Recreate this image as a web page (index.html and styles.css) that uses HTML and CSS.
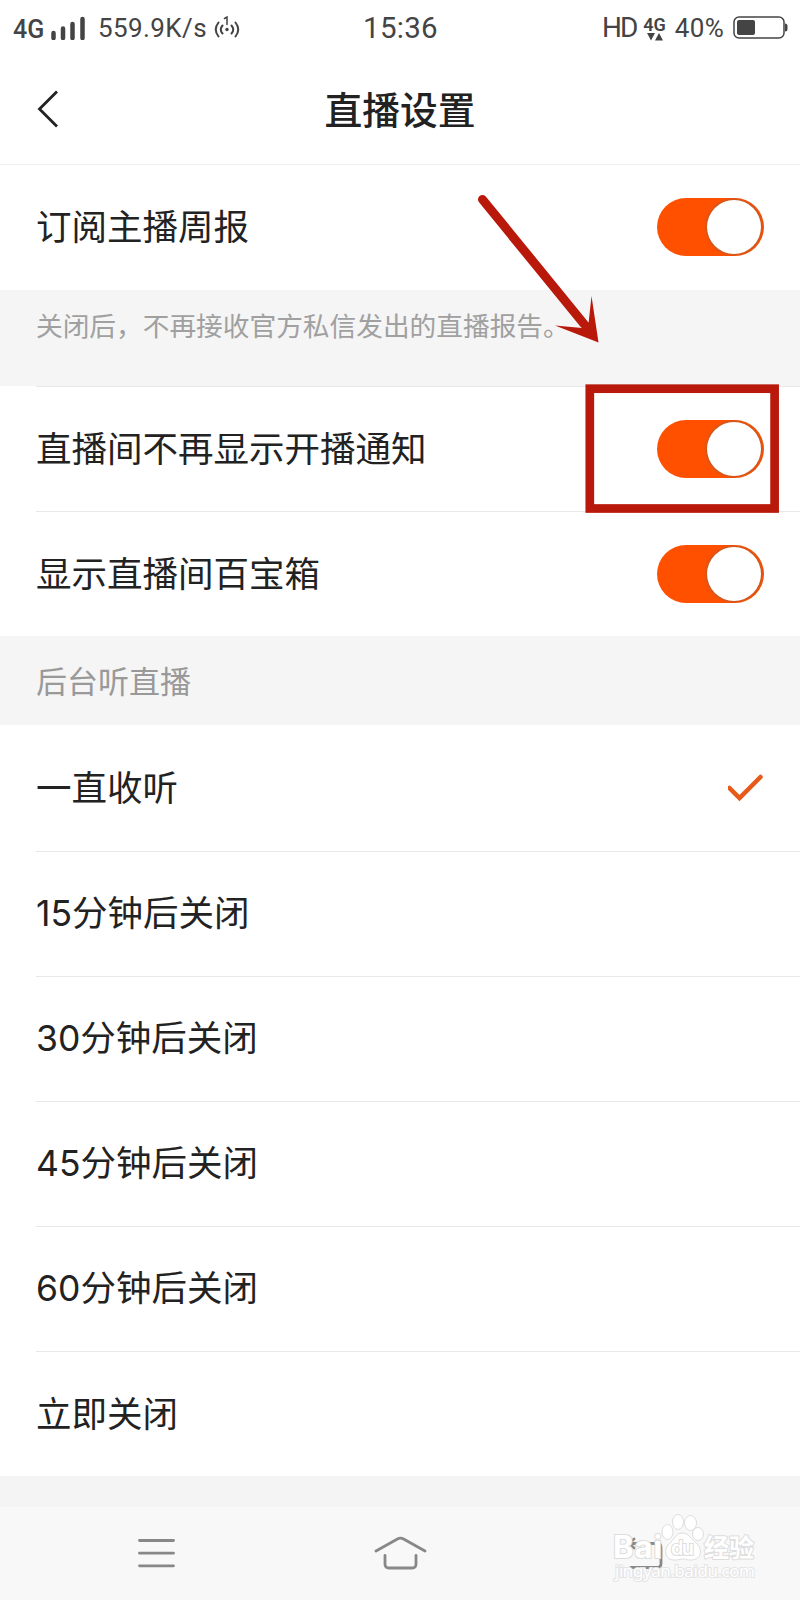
FILE: index.html
```
<!DOCTYPE html>
<html lang="zh-CN">
  <head>
    <meta charset="utf-8">
    <title>直播设置</title>
    <link rel="stylesheet" href="styles.css">
  </head>
  <body>
    <div class="status">
      <div class="status-side">
        <span class="net">4G</span>
        <svg class="signal" width="34" height="24" viewBox="0 0 34 24">
          <path d="M2.500 17v5M12 12.500v9.500M21.500 8v14M31.500 3v19" />
        </svg>
        <span class="speed">559.9K/s</span>
        <svg class="hotspot" width="26" height="24" viewBox="0 0 26 24">
          <path d="M4.500 6.500Q-1 13.500 4.500 20.500M8.500 9.500Q5 13.500 8.500 17.500M17.500 9.500Q21 13.500 17.500 17.500M21.500 6.500Q27 13.500 21.500 20.500" />
          <path class="thin" d="M10.500 2.500L13 1V8.500" />
          <circle cx="13" cy="13.500" r="1.700" />
        </svg>
      </div>
      <span class="time">15:36</span>
      <div class="status-side right">
        <span class="hd">HD</span>
        <div class="mini">
          <span>4G</span>
          <svg width="16" height="8" viewBox="0 0 16 8"><path d="M0 0h8l-4 7.500zM8 7.500h8l-4 -7.500z" /></svg>
        </div>
        <span class="percent">40%</span>
        <svg class="battery" width="55" height="24" viewBox="0 0 55 24">
          <rect class="shell" x="1" y="1" width="50" height="21" rx="5" />
          <rect x="4" y="4" width="18" height="15" rx="2" />
          <path d="M52 7.500q2.500 0 2.500 2.500v3q0 2.500 -2.500 2.500z" />
        </svg>
      </div>
    </div>

    <div class="header">
      <svg class="back" width="22" height="40" viewBox="0 0 22 40">
        <path d="M21 1.500L3.500 19L21 36.500" />
      </svg>
      <h1>直播设置</h1>
    </div>

    <div class="row first">
      <span>订阅主播周报</span>
      <div class="switch"></div>
    </div>
    <div class="note">关闭后，不再接收官方私信发出的直播报告。</div>
    <div class="group">
      <div class="row line">
        <span>直播间不再显示开播通知</span>
        <div class="switch"></div>
      </div>
      <div class="row line">
        <span>显示直播间百宝箱</span>
        <div class="switch"></div>
      </div>
    </div>

    <div class="label">后台听直播</div>
    <div class="group">
      <div class="row">
        <span>一直收听</span>
        <svg class="check" width="36" height="28" viewBox="0 0 36 28">
          <path d="M1.500 14L11.500 24L32.500 3" />
        </svg>
      </div>
      <div class="row line"><span>15分钟后关闭</span></div>
      <div class="row line"><span>30分钟后关闭</span></div>
      <div class="row line"><span>45分钟后关闭</span></div>
      <div class="row line"><span>60分钟后关闭</span></div>
      <div class="row line"><span>立即关闭</span></div>
    </div>
    <div class="spacer"></div>

    <div class="navbar">
      <svg width="38" height="30" viewBox="0 0 38 30">
        <path d="M2.500 2.500h34M2.500 15.200h34M2.500 27.800h34" />
      </svg>
      <svg width="54" height="34" viewBox="0 0 54 34">
        <path d="M2 15L23 3.200Q26.500 1.200 30 3.200L51 15M11 19.500v8.500q0 4 4 4h23q4 0 4 -4v-8.500" />
      </svg>
      <svg width="38" height="34" viewBox="0 0 38 34">
        <path d="M8 3L3 7.500L8 12M3 7.500h28q4 0 4 4v16q0 4 -4 4h-26" />
      </svg>
    </div>

    <!-- red arrow and frame over the second switch -->
    <svg class="marks" width="320" height="330" viewBox="470 190 320 330">
      <path class="shaft" d="M482.500 199.500L584 324" />
      <path class="tip" d="M598.500 342.500L555 325.500L582 328L588.700 322L591.500 296z" />
      <rect class="frame" x="589.800" y="388.700" width="184.800" height="119.800" />
    </svg>

    <svg class="watermark" width="160" height="80" viewBox="610 1510 160 80">
      <text class="logo" x="613" y="1558" textLength="49">Bai</text>
      <g class="paw">
        <ellipse cx="667.500" cy="1532" rx="5.500" ry="7.500" />
        <ellipse cx="678" cy="1522" rx="5.500" ry="7.500" />
        <ellipse cx="690.500" cy="1523" rx="6" ry="7.500" />
        <ellipse cx="698" cy="1534" rx="5.500" ry="6.500" />
        <path d="M682 1533C676 1533 674 1540 669 1544C664 1548 664 1559 673 1560C678 1560.500 679 1559 683 1559C687 1559 688 1560.500 692 1560C702 1559 703 1549 696 1543C691 1539 689 1533 682 1533z" />
      </g>
      <text class="du" x="671" y="1555" textLength="23">du</text>
      <text class="cn" x="704" y="1557" textLength="50">经验</text>
      <text class="url" x="615" y="1577" textLength="140">jingyan.baidu.com</text>
    </svg>
  </body>
</html>
```

FILE: styles.css
```
* {
  box-sizing: border-box;
}
body {
  margin: 0;
  width: 800px;
  height: 1600px;
  position: relative;
  overflow: hidden;
  background: #fff;
  color: #222;
  font-family: Inter, "Noto Sans CJK SC", sans-serif;
}
svg {
  display: block;
  flex: none;
}

.status {
  height: 56px;
  padding: 0 12px 0 13px;
  display: flex;
  align-items: center;
  justify-content: space-between;
  color: #444;
  line-height: 56px;
}
.status-side {
  width: 300px;
  height: 56px;
  display: flex;
  align-items: center;
}
.status-side.right {
  justify-content: flex-end;
}
.status svg {
  fill: #444;
}
.net {
  width: 33px;
  padding-top: 3px;
  font-family: Roboto, sans-serif;
  font-size: 25px;
  font-weight: 500;
}
.signal {
  margin-left: 5px;
}
.signal path {
  stroke: #444;
  stroke-width: 4.500;
  stroke-linecap: round;
}
.speed {
  width: 110px;
  margin-left: 13px;
  font-family: Roboto, sans-serif;
  font-size: 26px;
  letter-spacing: 0.4px;
}
.hotspot {
  margin-left: 6px;
}
.hotspot path {
  fill: none;
  stroke: #444;
  stroke-width: 2;
  stroke-linecap: round;
}
.hotspot .thin {
  stroke-width: 1.500;
}
.time {
  font-family: Roboto, sans-serif;
  font-size: 29.500px;
  letter-spacing: 0.3px;
}
.hd {
  font-family: Roboto, sans-serif;
  font-size: 28px;
  letter-spacing: -2px;
}
.mini {
  margin: 0 9px 0 7px;
  display: flex;
  flex-direction: column;
  align-items: center;
  font-family: Roboto, sans-serif;
  font-size: 18px;
  font-weight: 600;
  line-height: 17px;
}
.percent {
  font-family: Roboto, sans-serif;
  font-size: 26px;
  letter-spacing: 0.3px;
}
.battery {
  margin-left: 9px;
}
.battery .shell {
  fill: none;
  stroke: #444;
  stroke-width: 1.500;
}

.header {
  height: 109px;
  padding: 0 36px;
  display: grid;
  grid-template-columns: 22px 1fr 22px;
  align-items: center;
  border-bottom: 1px solid #eee;
}
.back path {
  fill: none;
  stroke: #222;
  stroke-width: 2.800;
}
h1 {
  margin: 0;
  text-align: center;
  font-size: 37.800px;
  font-weight: 500;
  line-height: 50px;
}

.row {
  height: 125.100px;
  padding-right: 36px;
  display: flex;
  align-items: center;
  justify-content: space-between;
  font-size: 35.500px;
  line-height: 50px;
}
.row span {
  padding-top: 1px;
}
.first {
  height: 124.500px;
  padding-left: 36px;
}
.first span {
  padding-top: 2px;
}
.group {
  padding-left: 36px;
}
.line {
  border-top: 1px solid #e8e8e8;
}
.switch {
  width: 107px;
  height: 58px;
  padding: 2px 3px;
  border-radius: 29px;
  background: #ff5000;
  overflow: hidden;
}
.switch::after {
  content: "";
  display: block;
  width: 54px;
  height: 54px;
  margin-left: auto;
  border-radius: 50%;
  background: #fff;
  box-shadow: 0 0 3px 1px #b85a2c;
}
.note {
  height: 96.500px;
  padding: 16px 36px 0;
  background: #f5f5f5;
  color: #a0a0a0;
  font-size: 26.700px;
  line-height: 40px;
}
.label {
  height: 89.300px;
  padding: 2px 0 0 36px;
  display: flex;
  align-items: center;
  background: #f5f5f5;
  color: #999;
  font-size: 31px;
  line-height: 44px;
}
.check path {
  fill: none;
  stroke: #e85a1a;
  stroke-width: 4.500;
  stroke-linecap: round;
}
.spacer {
  height: 31px;
  background: #f4f4f4;
}
.navbar {
  height: 94px;
  padding: 0 136px 2px 137px;
  display: flex;
  align-items: center;
  justify-content: space-between;
  background: #f8f8f8;
}
.navbar path {
  fill: none;
  stroke: #888;
  stroke-width: 2.800;
  stroke-linecap: round;
}

.marks {
  position: absolute;
  left: 470px;
  top: 190px;
}
.shaft {
  stroke: #b9190b;
  stroke-width: 9;
  stroke-linecap: round;
}
.tip {
  fill: #b9190b;
}
.frame {
  fill: none;
  stroke: #b9190b;
  stroke-width: 8.700;
}

.watermark {
  position: absolute;
  left: 610px;
  top: 1510px;
  fill: #fff;
  stroke: #ddd;
  stroke-width: 1;
}
.watermark text {
  paint-order: stroke;
  stroke-width: 2;
}
.logo {
  font-size: 31px;
  font-weight: 700;
}
.du {
  font-size: 20px;
  font-weight: 600;
}
.cn {
  font-size: 25px;
  font-weight: 700;
}
.watermark .url {
  font-family: "Noto Sans", sans-serif;
  font-size: 17px;
  stroke: #e4e4e4;
}
```
